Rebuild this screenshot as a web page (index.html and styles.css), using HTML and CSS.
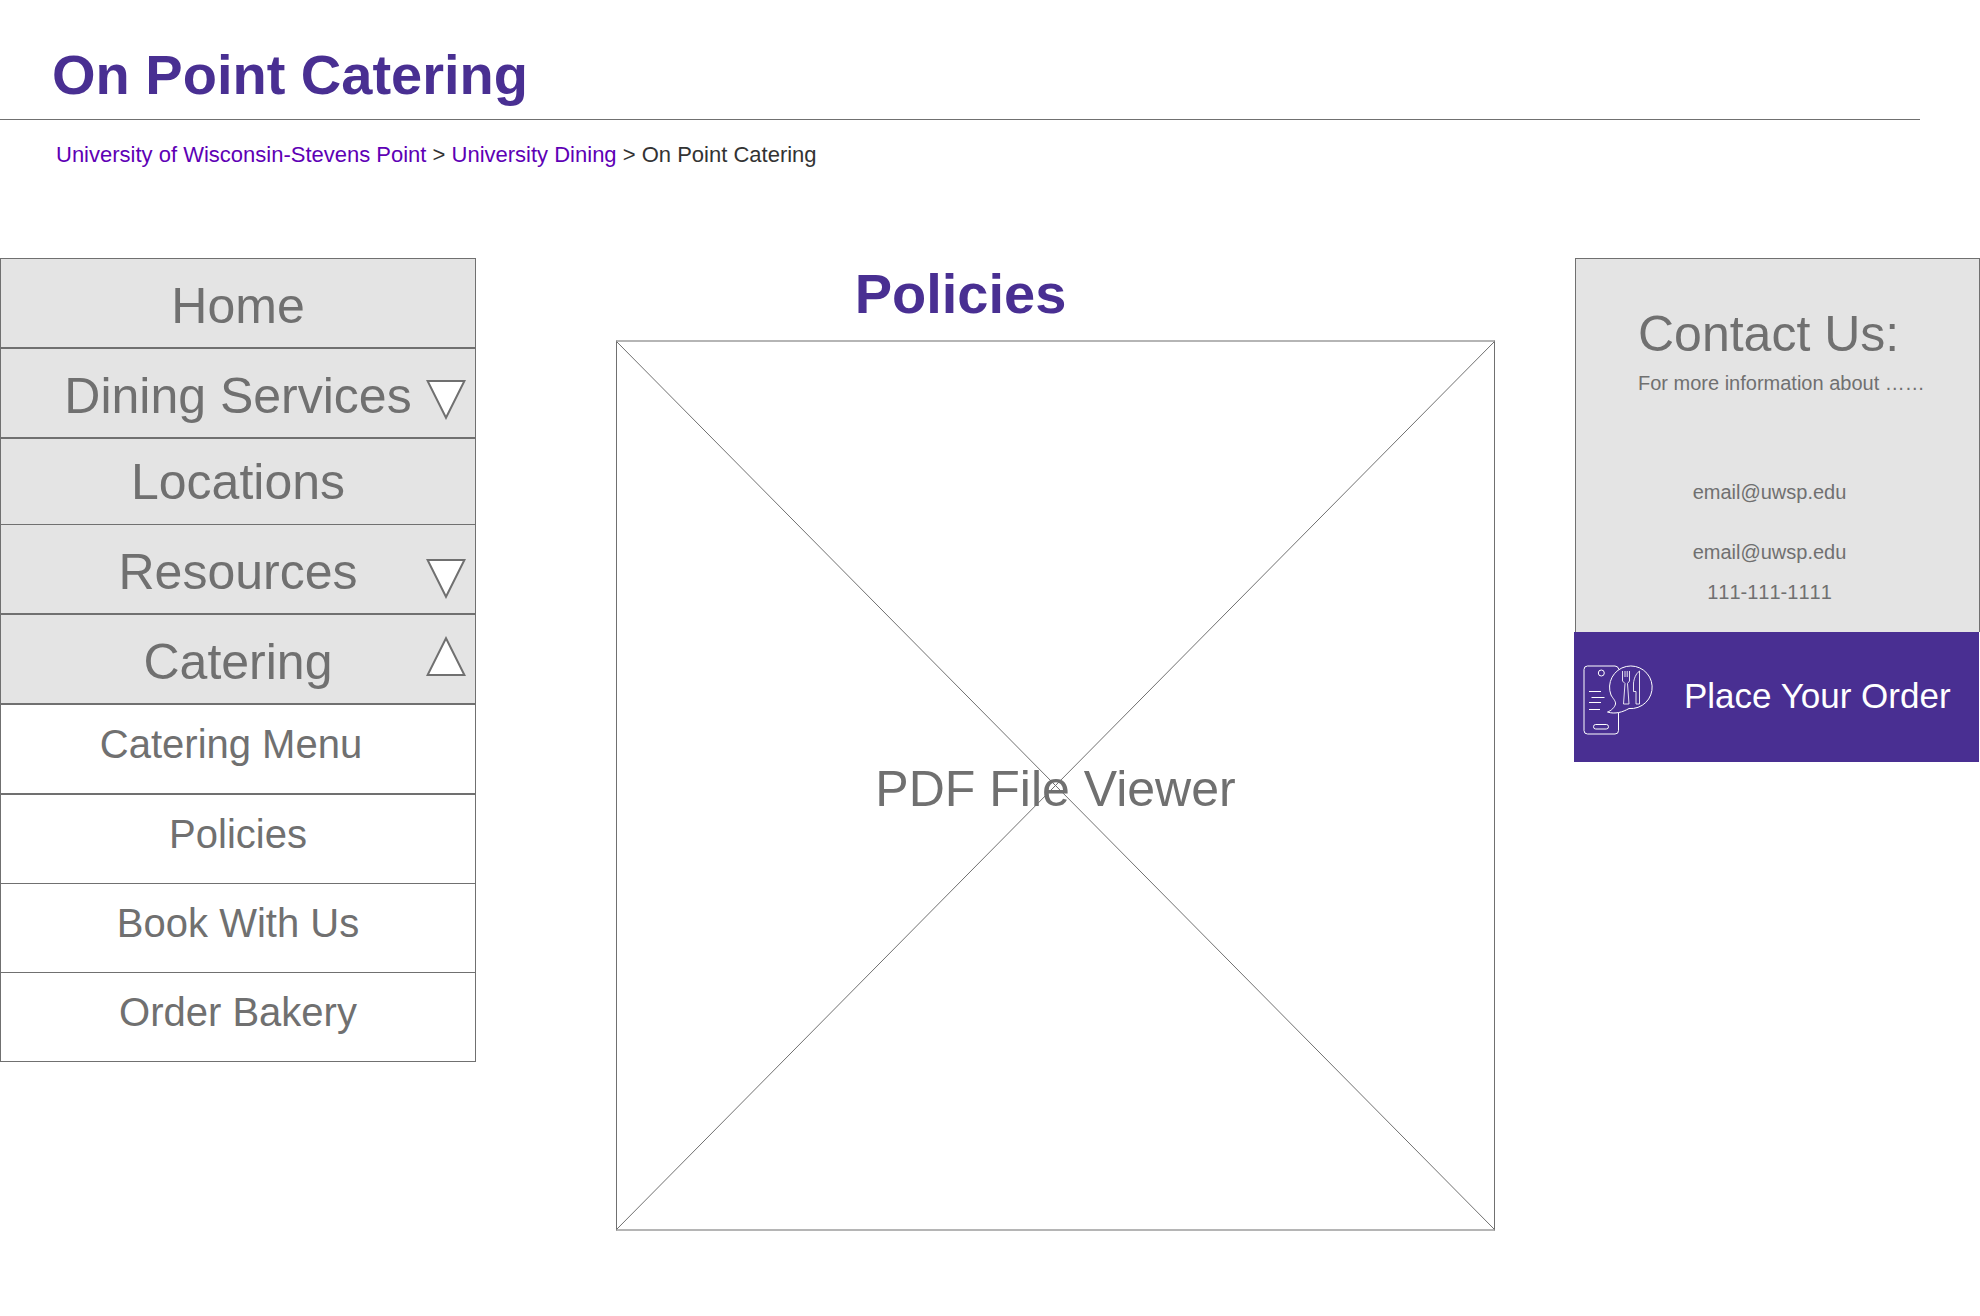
FILE: index.html
```html
<!DOCTYPE html>
<html lang="en">
<head>
<meta charset="utf-8">
<meta name="viewport" content="width=device-width, initial-scale=1">
<title>On Point Catering - Policies</title>
<link rel="stylesheet" href="styles.css">
</head>
<body>
<header class="site-header">
  <h1 class="title">On Point Catering</h1>
</header>
<nav class="breadcrumb" aria-label="Breadcrumb">
  <a href="#">University of Wisconsin-Stevens Point</a> &gt; <a href="#">University Dining</a> &gt; <span>On Point Catering</span>
</nav>
<div class="layout">
  <nav class="side-nav" aria-label="Main">
    <ul class="menu">
      <li class="item"><a class="link" href="#">Home</a></li>
      <li class="item"><a class="link" href="#">Dining Services</a>
        <button class="toggle" type="button" aria-label="Show Dining Services"><svg viewBox="0 0 40 40"><path d="M1.6 1H38.4L20 37.8Z"/></svg></button></li>
      <li class="item short"><a class="link" href="#">Locations</a></li>
      <li class="item joined"><a class="link" href="#">Resources</a>
        <button class="toggle" type="button" aria-label="Show Resources"><svg viewBox="0 0 40 40"><path d="M1.6 1H38.4L20 37.8Z"/></svg></button></li>
      <li class="item"><a class="link" href="#">Catering</a>
        <button class="toggle open" type="button" aria-label="Hide Catering"><svg viewBox="0 0 40 40"><path d="M1.6 39H38.4L20 2.2Z"/></svg></button></li>
      <li class="item sub wide"><a class="link" href="#">Catering Menu</a></li>
      <li class="item sub"><a class="link" href="#">Policies</a></li>
      <li class="item sub joined"><a class="link" href="#">Book With Us</a></li>
      <li class="item sub joined"><a class="link" href="#">Order Bakery</a></li>
    </ul>
  </nav>
  <main class="content">
    <h2 class="title page-title">Policies</h2>
    <div class="viewer">
      <svg class="cross" viewBox="0 0 100 100" preserveAspectRatio="none" aria-hidden="true"><path d="M0 0L100 100M100 0L0 100"/></svg>
      <span class="viewer-label">PDF File Viewer</span>
    </div>
  </main>
  <aside class="contact">
    <section class="card">
      <h2 class="card-title">Contact Us:</h2>
      <p class="intro">For more information about ……</p>
      <address class="details">
        <a class="first" href="#">email@uwsp.edu</a>
        <a href="#">email@uwsp.edu</a>
        <span class="phone">111-111-1111</span>
      </address>
    </section>
    <button class="order" type="button">
      <svg class="order-icon" viewBox="0 0 70 70" aria-hidden="true">
        <path d="M36 4.500Q35 1 32 1H4.500Q1 1 1 4.500V65.500Q1 69 4.500 69H32Q35.500 69 35.500 65.500V48"/>
        <circle cx="18.300" cy="8" r="3"/>
        <rect x="10.500" y="59.500" width="15" height="4.500" rx="2.200"/>
        <path d="M6 26.500H18M8.500 32.500H21.500M6 37.500H18M6 44.500H17"/>
        <path d="M46 43.500A21.300 21.300 0 1 0 28 30C29.500 33 33 36 32.500 39C32 42 28 46 24.500 47C32 49.500 40 47 46 43.500Z"/>
        <path class="fine" d="M39.500 6V16L42 18.500L40.500 39H46L44.500 18.500L46.500 16V6M42 6V12M44.200 6V12M56.500 6C52.500 9 51 14 50.500 18V26.500H53V39H56.500Z"/>
      </svg>
      <span class="order-label">Place Your Order</span>
    </button>
  </aside>
</div>
</body>
</html>
```

FILE: styles.css
```css
:root {
  --purple: #492f92;
  --violet: #5e00b5;
  --gray: #707070;
  --panel: #e4e4e4;
}

* { box-sizing: border-box; }

body {
  margin: 0;
  background: #fff;
  color: var(--gray);
  font-family: "Helvetica Neue", "Liberation Sans", Arial, sans-serif;
}

h1, h2, p, ul { margin: 0; padding: 0; font-weight: 400; }
a { color: inherit; text-decoration: none; }

.site-header {
  margin-right: 60px;
  padding: 43px 0 12px 52px;
  border-bottom: 1px solid var(--gray);
}

.title {
  color: var(--purple);
  font-size: 56px;
  font-weight: 700;
  line-height: 64px;
}

.breadcrumb {
  padding: 21px 0 0 56px;
  color: #333;
  font-size: 22px;
  line-height: 28px;
}
.breadcrumb a { color: var(--violet); }

.layout {
  display: grid;
  grid-template-columns: 476fr 1098fr 406fr;
  align-items: start;
  margin-top: 89px;
  padding-bottom: 80px;
}

.menu { list-style: none; }

.item {
  display: grid;
  height: 90px;
  border: 1px solid var(--gray);
  background: var(--panel);
}
.item.short { height: 87px; }
.item.joined { height: 89px; border-top: 0; }
.item.sub { background: #fff; }

.link {
  grid-area: 1 / 1;
  display: flex;
  align-items: center;
  justify-content: center;
  padding-top: 5px;
  font-size: 50px;
  line-height: 56px;
}
.short .link { padding-top: 0; }
.sub .link { padding: 0 0 10px; font-size: 40px; }
.wide .link { padding-right: 14px; }

.toggle {
  grid-area: 1 / 1;
  justify-self: end;
  align-self: center;
  width: 40px;
  height: 40px;
  margin: 14px 9px 0 0;
  padding: 0;
  border: 0;
  background: none;
}
.joined .toggle { margin-top: 20px; }
.toggle.open { margin: 0 9px 6px 0; }
.toggle svg { display: block; fill: #fff; stroke: var(--gray); stroke-width: 2; }

.content { padding: 4px 79px 0 140px; }

.page-title { padding-right: 190px; text-align: center; }

.viewer {
  display: grid;
  height: 891px;
  margin-top: 14px;
  border: 1px solid var(--gray);
  border-width: 2px 1px;
  border-block-color: #b5b5b5;
}
.cross {
  grid-area: 1 / 1;
  width: 100%;
  height: 100%;
  fill: none;
  stroke: var(--gray);
}
.cross path { vector-effect: non-scaling-stroke; }
.viewer-label {
  grid-area: 1 / 1;
  place-self: center;
  padding-top: 6px;
  font-size: 50px;
  line-height: 56px;
}

.card {
  margin-left: 1px;
  padding: 46px 0 20px 62px;
  border: 1px solid var(--gray);
  border-bottom: 0;
  background: var(--panel);
}
.card-title { font-size: 50px; line-height: 58px; }
.intro, .details { font-size: 20px; line-height: 40px; }
.details {
  display: grid;
  justify-items: center;
  margin: 69px 78px 0 0;
  font-style: normal;
}
.details .first { margin-bottom: 20px; }
.phone { font-kerning: none; }

.order {
  display: flex;
  align-items: center;
  gap: 31px;
  width: calc(100% - 1px);
  height: 130px;
  padding: 0 0 0 9px;
  border: 0;
  background: var(--purple);
  color: #fff;
  font: 35px/40px "Liberation Sans", Arial, sans-serif;
}
.order-icon {
  flex: none;
  width: 70px;
  height: 70px;
  margin-top: 6px;
  fill: none;
  stroke: #fff;
  stroke-width: 1;
  stroke-linejoin: round;
}
.order-icon .fine { stroke-opacity: 0.85; }
.order-label { padding-bottom: 2px; }
```
